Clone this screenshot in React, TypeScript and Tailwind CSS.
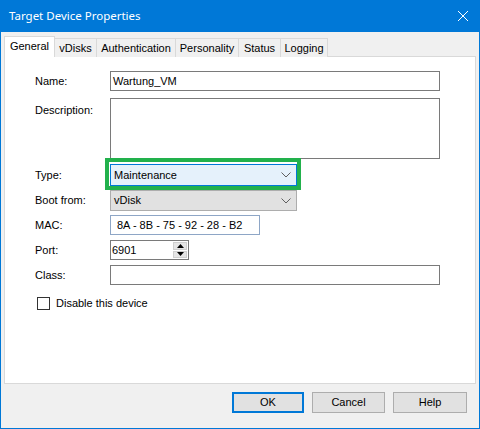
import React from "react";

const ui = { fontFamily: '"Liberation Sans", Arial, sans-serif' };

function Chevron() {
  return (
    <svg className="h-[6px] w-[10px]" viewBox="0 0 10 6" fill="none" stroke="#5f5f5f" strokeWidth={1}>
      <path d="M0.5 0.5 L5 5 L9.5 0.5" />
    </svg>
  );
}

function Row({ label, children, top, start }: { label: string; children: React.ReactNode; top: string; start?: boolean }) {
  return (
    <div className={`flex ${start ? "items-start" : "items-center"} ${top}`}>
      <div className={`w-[75px] shrink-0 ${start ? "pt-[4px]" : ""}`}>{label}</div>
      {children}
    </div>
  );
}

export default function App() {
  const tabs = ["vDisks", "Authentication", "Personality", "Status", "Logging"];
  const tabWidths = ["w-[43px]", "w-[80px]", "w-[64px]", "w-[43px]", "w-[48px]"];
  return (
    <div className="w-[480px] h-[429px] bg-[#f0f0f0] border-x border-b border-[#0078d7] flex flex-col text-[11px] text-black overflow-hidden" style={ui}>
      {/* Title bar */}
      <div className="h-[32px] shrink-0 bg-[#0078d7] flex items-center justify-between pl-[8px] pr-[11px]">
        <span className="text-white text-[11.5px] leading-none" style={{ fontFamily: '"Noto Sans", "Open Sans", sans-serif' }}>
          Target Device Properties
        </span>
        <svg className="h-[10px] w-[10px]" viewBox="0 0 10 10" stroke="white" strokeWidth={1}>
          <path d="M0 0 L10 10 M10 0 L0 10" />
        </svg>
      </div>

      {/* Tabs */}
      <div className="mt-[4px] ml-[3px] flex items-end h-[21px] relative z-10">
        <div className="w-[51px] h-[21px] bg-white border-x border-t border-[#d9d9d9] flex items-center justify-center pb-[1px]">
          General
        </div>
        {tabs.map((t, i) => (
          <div
            key={t}
            className={`${tabWidths[i]} -ml-px h-[19px] bg-[#f0f0f0] border-x border-t border-[#d9d9d9] flex items-center justify-center pt-[1px]`}
          >
            {t}
          </div>
        ))}
      </div>

      {/* Panel */}
      <div className="mx-[3px] -mt-px h-[328px] bg-white border border-[#d9d9d9] pl-[30px] pt-[14px] flex flex-col">
        <Row label="Name:" top="">
          <div className="w-[330px] h-[20px] border border-[#7a7a7a] flex items-center pl-[2px]">Wartung_VM</div>
        </Row>
        <Row label="Description:" top="mt-[7px]" start>
          <div className="w-[330px] h-[61px] border border-[#7a7a7a]" />
        </Row>
        <Row label="Type:" top="mt-[5px]">
          <div className="relative">
            <div className="w-[187px] h-[22px] border border-[#0078d7] bg-[#e5f1fb] flex items-center justify-between pl-[3px] pr-[5px]">
              <span>Maintenance</span>
              <Chevron />
            </div>
            <div className="absolute -left-[5px] -top-[6px] -right-[4px] -bottom-[4px] border-[4px] border-[#22b14c] pointer-events-none" />
          </div>
        </Row>
        <Row label="Boot from:" top="mt-[4px]">
          <div className="w-[187px] h-[21px] border border-[#adadad] bg-[#e1e1e1] flex items-center justify-between pl-[3px] pr-[5px]">
            <span>vDisk</span>
            <Chevron />
          </div>
        </Row>
        <Row label="MAC:" top="mt-[4px]">
          <div className="w-[150px] h-[20px] border border-[#8ea6c6] flex items-center pl-[6px]">8A - 8B - 75 - 92 - 28 - B2</div>
        </Row>
        <Row label="Port:" top="mt-[5px]">
          <div className="w-[79px] h-[20px] border border-[#7a7a7a] flex items-center justify-between pl-[1px] pr-px">
            <span>6901</span>
            <div className="flex flex-col h-[16px] w-[14px] gap-px">
              <div className="flex-1 bg-[#e5e5e5] border border-[#cfcfcf] flex items-center justify-center">
                <svg className="h-[4px] w-[7px]" viewBox="0 0 7 4" fill="black"><path d="M3.5 0 L7 4 L0 4 Z" /></svg>
              </div>
              <div className="flex-1 bg-[#e5e5e5] border border-[#cfcfcf] flex items-center justify-center">
                <svg className="h-[4px] w-[7px]" viewBox="0 0 7 4" fill="black"><path d="M0 0 L7 0 L3.5 4 Z" /></svg>
              </div>
            </div>
          </div>
        </Row>
        <Row label="Class:" top="mt-[5px]">
          <div className="w-[330px] h-[20px] border border-[#7a7a7a]" />
        </Row>
        <div className="mt-[10px] ml-[2px] flex items-center gap-[6px]">
          <div className="w-[13px] h-[13px] border border-[#333333] bg-white" />
          <span>Disable this device</span>
        </div>
      </div>

      {/* Buttons */}
      <div className="mt-[8px] flex justify-end gap-[8px] pr-[12px]">
        <div className="w-[72px] h-[21px] bg-[#e1e1e1] border-2 border-[#0078d7] flex items-center justify-center">OK</div>
        <div className="w-[73px] h-[21px] bg-[#e1e1e1] border border-[#adadad] flex items-center justify-center">Cancel</div>
        <div className="w-[74px] h-[21px] bg-[#e1e1e1] border border-[#adadad] flex items-center justify-center">Help</div>
      </div>
    </div>
  );
}
